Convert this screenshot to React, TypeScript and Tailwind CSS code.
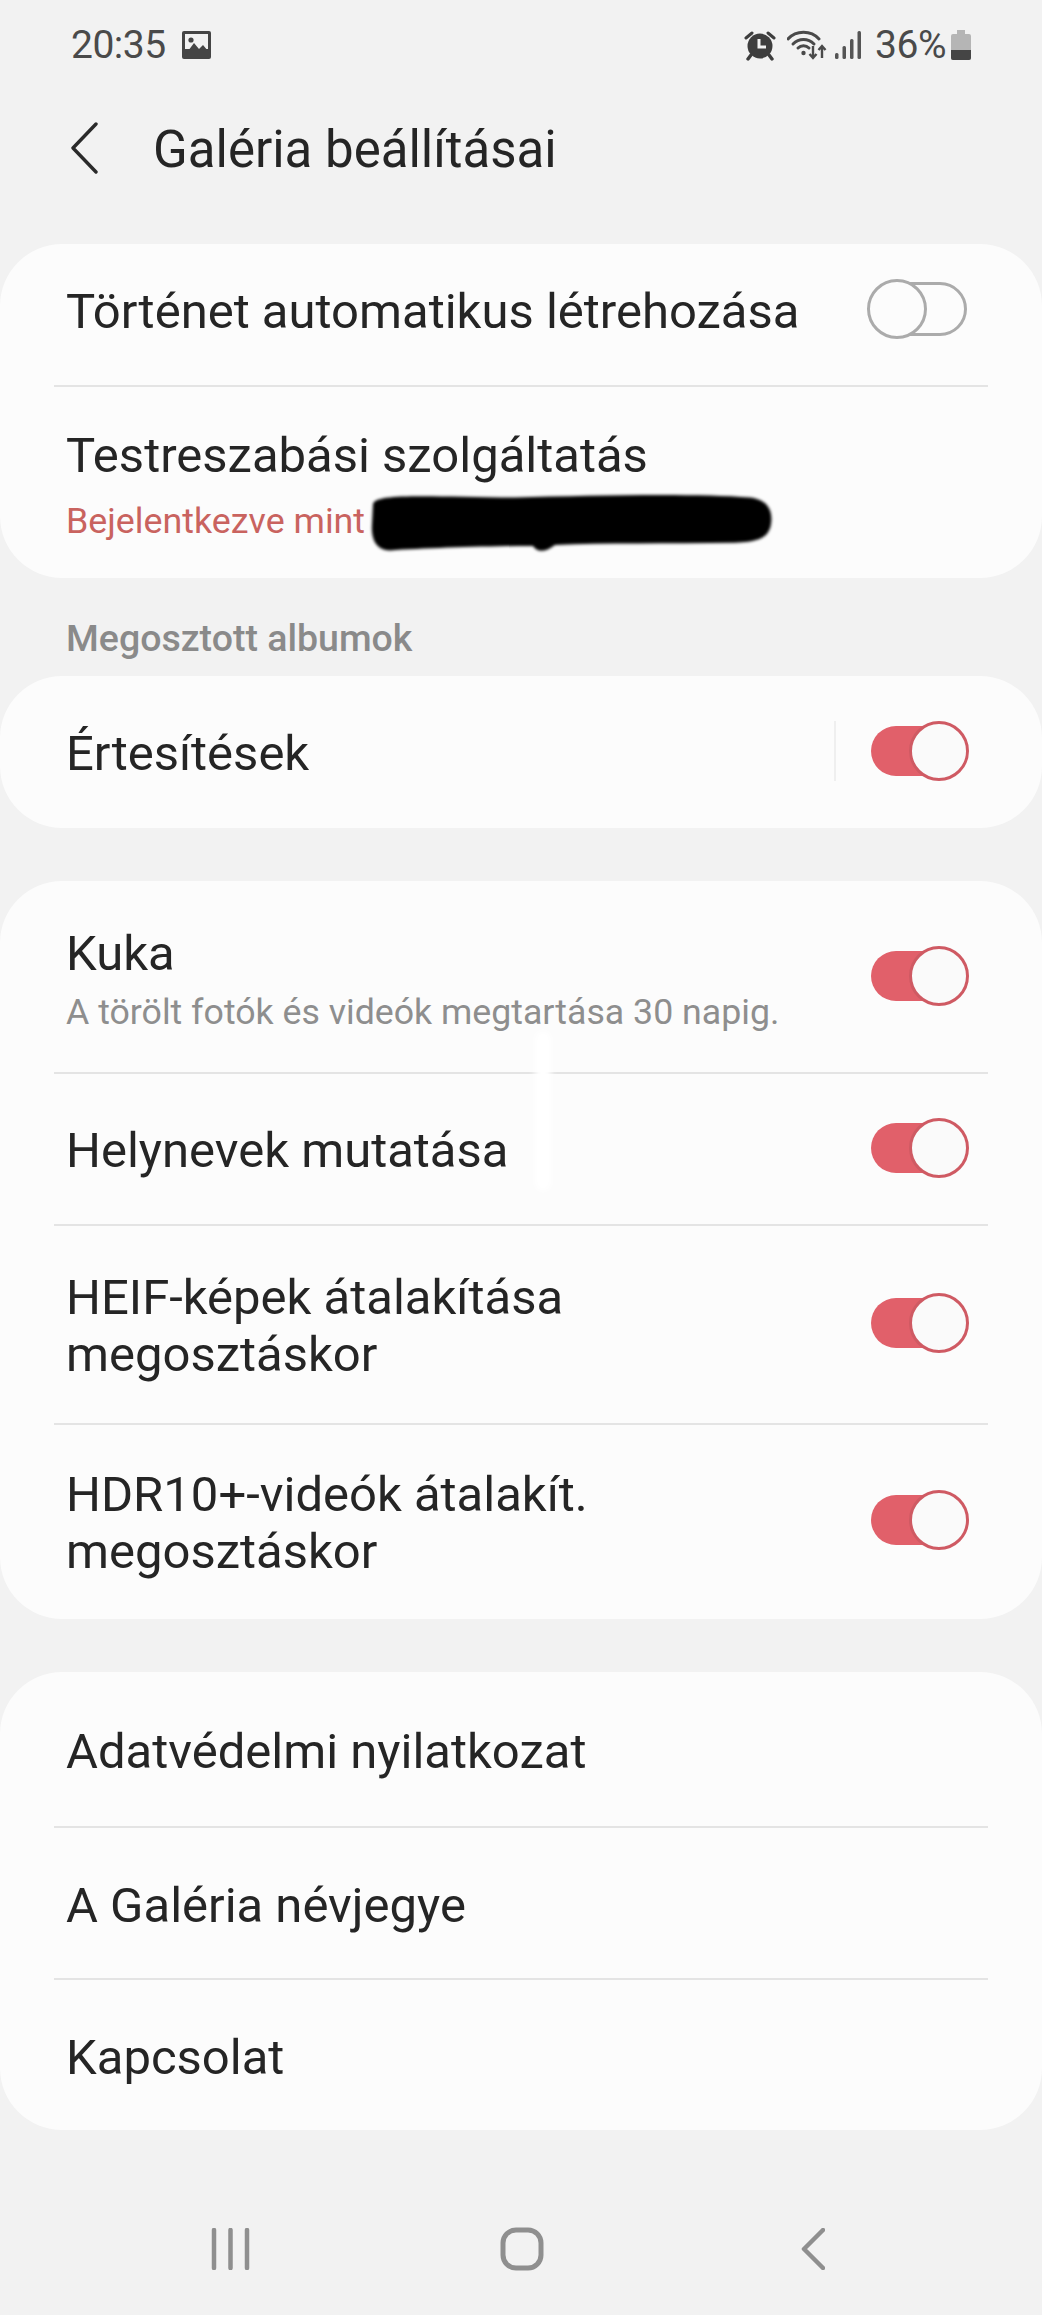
function Toggle({ on = true }: { on?: boolean }) {
  if (!on) {
    return (
      <div className="relative mr-[2px] h-[60px] w-[100px] shrink-0">
        <div className="absolute left-[20px] right-0 top-[3px] h-[54px] rounded-r-full border-[3px] border-[#ababab]" />
        <div className="absolute left-0 top-0 h-[60px] w-[60px] rounded-full border-[3px] border-[#ababab] bg-[#fcfcfc]" />
      </div>
    )
  }
  return (
    <div className="relative h-[60px] w-[100px] shrink-0">
      <div className="absolute left-[2px] right-[10px] top-[5px] h-[50px] rounded-full bg-[#e1606a]" />
      <div className="absolute right-0 top-0 h-[60px] w-[60px] rounded-full border-[3px] border-[#cf5a63] bg-[#fafafa]" />
    </div>
  )
}

function Divider() {
  return <div className="mx-[54px] h-[2px] bg-[#e4e4e4]" />
}

function Card({ children, className = '' }: { children: React.ReactNode; className?: string }) {
  return <div className={`relative overflow-hidden rounded-[62px] bg-[#fcfcfc] ${className}`}>{children}</div>
}

function StatusBar() {
  return (
    <div className="flex h-[90px] items-center justify-between pl-[71px] pr-[71px] text-[39px] tracking-[-0.5px] text-[#4a4a4a]">
      <div className="flex items-center gap-[16px]">
        <span>20:35</span>
        <svg width="29" height="28" viewBox="0 0 29 28">
          <rect width="29" height="28" rx="2" fill="#454545" />
          <rect x="3" y="3" width="23" height="15" fill="#f2f2f2" />
          <circle cx="9" cy="9" r="2.6" fill="#454545" />
          <path d="M3 24 L12 12 L17 18 L21 14 L26 20 V25 H3 Z" fill="#454545" />
        </svg>
      </div>
      <div className="flex items-center">
        <svg width="32" height="31" viewBox="0 0 32 31" className="mr-[11px]">
          <path d="M2 8 L8 3 M30 8 L24 3" stroke="#3e3e3e" strokeWidth="3" strokeLinecap="round" />
          <circle cx="16" cy="16" r="12.5" fill="#3e3e3e" />
          <path d="M15 9 V17 H22" stroke="#f2f2f2" strokeWidth="3" fill="none" />
          <path d="M7 25 L4 29 M25 25 L28 29" stroke="#3e3e3e" strokeWidth="3.4" strokeLinecap="round" />
        </svg>
        <svg width="40" height="30" viewBox="0 0 40 30" className="mr-[8px]">
          <path d="M1 9 C9 0 24 0 32 9" stroke="#4a4a4a" strokeWidth="3" fill="none" strokeLinecap="round" />
          <path d="M6 14 C12 8 21 8 27 14" stroke="#4a4a4a" strokeWidth="3" fill="none" strokeLinecap="round" />
          <path d="M11 18 C14 15 19 15 22 18" stroke="#4a4a4a" strokeWidth="3" fill="none" strokeLinecap="round" />
          <circle cx="16.5" cy="23" r="2.2" fill="#4a4a4a" />
          <path d="M26 16 V28 M22.5 24 L26 28 L29.5 24" stroke="#4a4a4a" strokeWidth="2.4" fill="none" />
          <path d="M35 28 V16 M31.5 20 L35 16 L38.5 20" stroke="#4a4a4a" strokeWidth="2.4" fill="none" />
        </svg>
        <svg width="26" height="28" viewBox="0 0 26 28" className="mr-[14px]">
          <rect x="0" y="22" width="3.5" height="6" rx="1.5" fill="#555" />
          <rect x="7.5" y="15" width="3.5" height="13" rx="1.5" fill="#555" />
          <rect x="15" y="8" width="3.5" height="20" rx="1.5" fill="#555" />
          <rect x="22.5" y="0" width="3.5" height="28" rx="1.5" fill="#555" />
        </svg>
        <span className="mr-[5px]">36%</span>
        <svg width="20" height="30" viewBox="0 0 20 30">
          <path d="M6 0 H14 V4 H18 Q20 4 20 6 V28 Q20 30 18 30 H2 Q0 30 0 28 V6 Q0 4 2 4 H6 Z" fill="#b5b5b5" />
          <path d="M0 20 H20 V28 Q20 30 18 30 H2 Q0 30 0 28 Z" fill="#454545" />
        </svg>
      </div>
    </div>
  )
}

function Row({ children, on, height }: { children: React.ReactNode; on?: boolean; height: string }) {
  return (
    <div className={`flex items-center justify-between pl-[66px] pr-[73px] ${height}`}>
      <div className="mt-[5px] text-[49px] leading-[57px] text-[#252525]">{children}</div>
      {on !== undefined && <Toggle on={on} />}
    </div>
  )
}

export default function App() {
  return (
    <div className="h-[2315px] w-[1042px] overflow-hidden bg-[#f2f2f2] font-['Roboto',sans-serif]">
      <StatusBar />

      <div className="flex h-[116px] items-center pl-[70px]">
        <svg width="28" height="52" viewBox="0 0 28 52">
          <path d="M26 2 L3 26 L26 50" stroke="#2a2a2a" strokeWidth="3.4" fill="none" strokeLinecap="round" strokeLinejoin="round" />
        </svg>
        <span className="ml-[55px] mt-[4px] text-[51px] text-[#252525]">Galéria beállításai</span>
      </div>

      <Card className="mt-[38px]">
        <Row on={false} height="h-[141px] pb-[12px]">Történet automatikus létrehozása</Row>
        <Divider />
        <div className="flex h-[191px] flex-col pl-[66px] pt-[40px]">
          <div className="text-[49px] leading-[57px] text-[#252525]">Testreszabási szolgáltatás</div>
          <div className="mt-[7px] flex items-center">
            <span className="mb-[6px] text-[35.8px] leading-[44px] text-[#c9635f]">Bejelentkezve mint</span>
            <svg width="410" height="66" viewBox="0 0 410 60" preserveAspectRatio="none" className="shrink-0">
              <path d="M8 12 C10 2 60 5 150 6 C230 4 330 2 385 6 C403 8 408 18 406 30 C404 42 395 46 370 47 C300 48 240 47 190 49 C180 56 172 56 168 50 C120 50 60 52 25 54 C10 54 6 42 7 30 Z" fill="#000000" className="blur-[1.5px]" />
            </svg>
          </div>
        </div>
      </Card>

      <div className="pl-[66px] pt-[40px] text-[37.5px] font-medium leading-[40px] text-[#8a8a8a]">Megosztott albumok</div>

      <Card className="mt-[18px]">
        <div className="flex h-[152px] items-center pl-[66px] pr-[73px] pb-[2px]">
          <div className="mt-[5px] grow text-[49px] leading-[57px] text-[#252525]">Értesítések</div>
          <div className="mr-[33px] h-[60px] w-[2px] bg-[#efefef]" />
          <Toggle />
        </div>
      </Card>

      <Card className="mt-[53px]">
        <div className="flex h-[191px] items-center justify-between pl-[66px] pr-[73px] pb-[1px]">
          <div className="mt-[5px]">
            <div className="text-[49px] leading-[57px] text-[#252525]">Kuka</div>
            <div className="mt-[9px] text-[35.7px] leading-[42px] text-[#8e8e8e]">A törölt fotók és videók megtartása 30 napig.</div>
          </div>
          <Toggle />
        </div>
        <Divider />
        <Row on height="h-[150px] pb-[3px]">Helynevek mutatása</Row>
        <Divider />
        <Row on height="h-[197px] pb-[3px]">HEIF-képek átalakítása<br />megosztáskor</Row>
        <Divider />
        <Row on height="h-[194px] pb-[4px]">HDR10+-videók átalakít.<br />megosztáskor</Row>
        <div className="absolute left-[535px] top-[150px] h-[160px] w-[16px] rounded-full bg-white blur-[3px]" />
      </Card>

      <Card className="mt-[53px]">
        <Row height="h-[154px]">Adatvédelmi nyilatkozat</Row>
        <Divider />
        <Row height="h-[150px]">A Galéria névjegye</Row>
        <Divider />
        <Row height="h-[150px]">Kapcsolat</Row>
      </Card>

      <div className="mt-[97px] flex items-center justify-between pl-[211px] pr-[217px]">
        <svg width="39" height="42" viewBox="0 0 39 42">
          <path d="M3 2 V40 M19.5 2 V40 M36 2 V40" stroke="#8f8f8f" strokeWidth="4.5" strokeLinecap="round" />
        </svg>
        <svg width="44" height="44" viewBox="0 0 44 44" className="-translate-x-[4px]">
          <rect x="3" y="3" width="38" height="38" rx="13" stroke="#8f8f8f" strokeWidth="5" fill="none" />
        </svg>
        <svg width="24" height="42" viewBox="0 0 24 42">
          <path d="M22 2 L3 21 L22 40" stroke="#8f8f8f" strokeWidth="4.5" fill="none" strokeLinecap="round" strokeLinejoin="round" />
        </svg>
      </div>
    </div>
  )
}
